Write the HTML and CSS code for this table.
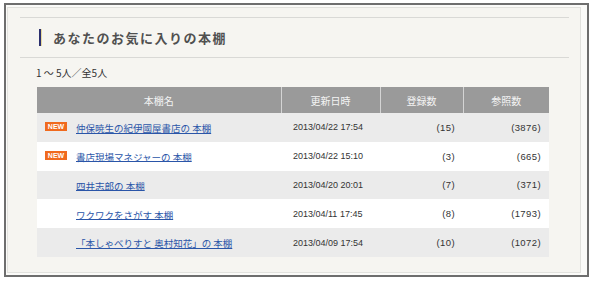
FILE: index.html
```html
<!DOCTYPE html>
<html lang="ja">
<head>
<meta charset="utf-8">
<title>あなたのお気に入りの本棚</title>
<link rel="stylesheet" href="styles.css">
</head>
<body>
<div class="frame">
  <div class="panel">
    <hr class="rule">
    <h2 class="title"><span class="bar"></span><span class="title-text">あなたのお気に入りの本棚</span></h2>
    <hr class="rule">
    <p class="count">1 〜 5人／全5人</p>
    <table class="shelves">
      <colgroup>
        <col class="c-name"><col class="c-date"><col class="c-reg"><col class="c-ref">
      </colgroup>
      <thead>
        <tr><th>本棚名</th><th>更新日時</th><th>登録数</th><th>参照数</th></tr>
      </thead>
      <tbody>
        <tr class="odd">
          <td class="name"><span class="slot"><span class="new">NEW</span></span><a href="#">仲保暁生の紀伊國屋書店の 本棚</a></td>
          <td class="date">2013/04/22 17:54</td><td class="num">(15)</td><td class="num">(3876)</td>
        </tr>
        <tr>
          <td class="name"><span class="slot"><span class="new">NEW</span></span><a href="#">書店現場マネジャーの 本棚</a></td>
          <td class="date">2013/04/22 15:10</td><td class="num">(3)</td><td class="num">(665)</td>
        </tr>
        <tr class="odd">
          <td class="name"><span class="slot"></span><a href="#">四井志郎の 本棚</a></td>
          <td class="date">2013/04/20 20:01</td><td class="num">(7)</td><td class="num">(371)</td>
        </tr>
        <tr>
          <td class="name"><span class="slot"></span><a href="#">ワクワクをさがす 本棚</a></td>
          <td class="date">2013/04/11 17:45</td><td class="num">(8)</td><td class="num">(1793)</td>
        </tr>
        <tr class="odd">
          <td class="name"><span class="slot"></span><a href="#">「本しゃべりすと 奥村知花」の 本棚</a></td>
          <td class="date">2013/04/09 17:54</td><td class="num">(10)</td><td class="num">(1072)</td>
        </tr>
      </tbody>
    </table>
  </div>
</div>
</body>
</html>
```
FILE: styles.css
```css
* { box-sizing: border-box; }
html, body { margin: 0; padding: 0; background: #ffffff; }
body {
  font-family: "Noto Sans CJK JP", "Noto Sans", sans-serif;
  color: #333;
}
.frame {
  margin: 3px 0 0 4px;
  width: 585px;
  height: 274px;
  border: 2px solid #6e6e6e;
  padding: 2px 6px 2px 1px;
  background: #fbfbf9;
}
.panel {
  height: 100%;
  border: 1px solid #e2e2de;
  background: #f6f5f1;
  padding-top: 9px;
}
.rule {
  margin: 0 11px 0 12px;
  border: 0;
  height: 1px;
  background: #d9d9d6;
}
.title {
  margin: 0;
  height: 39px;
  display: flex;
  align-items: center;
  padding-left: 31px;
  font-size: 13px;
  font-weight: bold;
  color: #505050;
  letter-spacing: 1.5px;
  line-height: 1;
}
.bar {
  width: 3px;
  height: 17px;
  border-left: 2px solid #2b2f6e;
  border-right: 1px solid #e6d9a0;
  margin-right: 11px;
}
.count {
  margin: 9px 0 0 28px;
  font-size: 10px;
  line-height: 12px;
  color: #333;
}
.shelves {
  margin: 8px 0 0 29px;
  width: 512px;
  border-collapse: collapse;
  table-layout: fixed;
  font-size: 9px;
}
.c-name { width: 244px; }
.c-date { width: 99px; }
.c-reg { width: 83px; }
.c-ref { width: 86px; }
.shelves th {
  height: 26px;
  background: #9a9a9a;
  color: #f4f4f4;
  font-weight: normal;
  font-size: 10px;
  border-left: 1px solid #d4d4d4;
  padding: 0;
}
.shelves th:first-child { border-left: 0; }
.shelves td {
  height: 28.8px;
  padding: 0;
  background: #ffffff;
  white-space: nowrap;
}
.shelves tr.odd td { background: #ebebeb; }
.name { padding-left: 8px !important; }
.slot {
  display: inline-block;
  width: 31px;
  vertical-align: middle;
}
.new {
  display: inline-block;
  width: 22px;
  height: 9px;
  background: #f06a1e;
  color: #fff;
  font-family: "Liberation Sans", Arial, sans-serif;
  font-size: 7px;
  font-weight: bold;
  line-height: 9px;
  text-align: center;
  vertical-align: middle;
  position: relative;
  top: -2px;
}
.name a {
  color: #2a55a8;
  font-size: 9.5px;
  text-decoration: underline;
  vertical-align: middle;
}
.date {
  padding-left: 12px !important;
  font-family: "Liberation Sans", Arial, sans-serif;
  font-size: 9px;
  color: #333;
}
.num {
  text-align: right;
  padding-right: 8px !important;
  font-family: "Liberation Sans", Arial, sans-serif;
  font-size: 9.5px;
  color: #333;
  letter-spacing: 0.4px;
}
```
